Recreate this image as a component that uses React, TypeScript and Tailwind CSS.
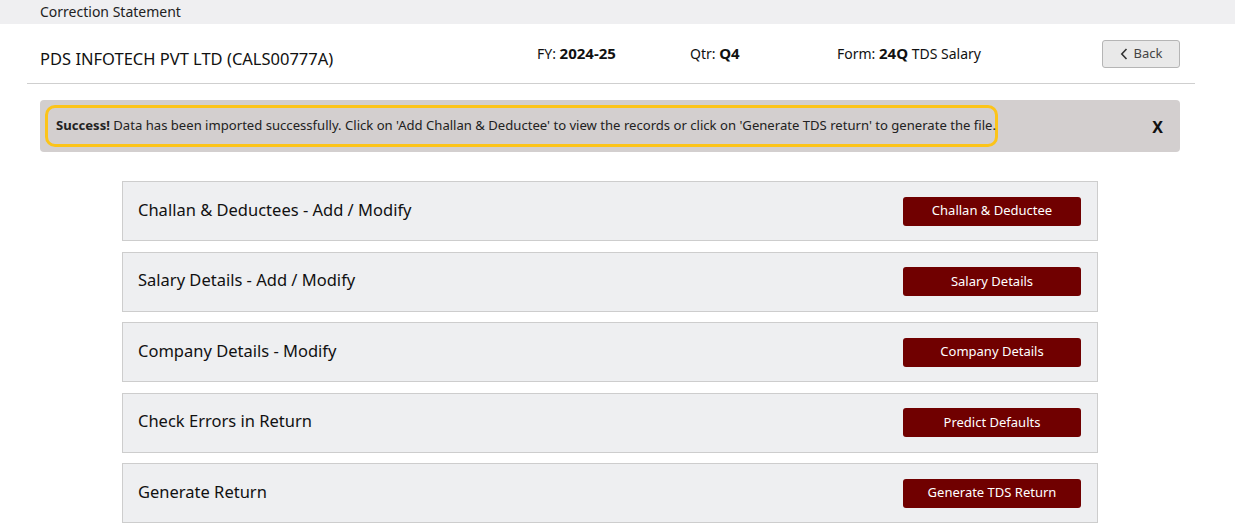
import React from "react";

const rows = [
  { title: "Challan & Deductees - Add / Modify", action: "Challan & Deductee" },
  { title: "Salary Details - Add / Modify", action: "Salary Details" },
  { title: "Company Details - Modify", action: "Company Details" },
  { title: "Check Errors in Return", action: "Predict Defaults" },
  { title: "Generate Return", action: "Generate TDS Return" },
];

export default function App() {
  return (
    <div className="min-h-screen bg-white text-[#111] font-['Noto_Sans',sans-serif]">
      <div className="h-6 bg-[#efeff1] pl-10 text-[14px] leading-6 text-[#222]">
        Correction Statement
      </div>

      <div className="mx-[27px] w-[1168px] border-b border-[#cfcfcf]">
        <div className="flex h-[59px] items-center pl-[13px] pr-[15px]">
          <div className="w-[497px] pt-[11px] text-[16.5px]">PDS INFOTECH PVT LTD (CALS00777A)</div>
          <div className="w-[153px] text-[14px]">
            FY: <span className="font-bold text-[15px]">2024-25</span>
          </div>
          <div className="w-[147px] text-[14px]">
            Qtr: <span className="font-bold text-[15px]">Q4</span>
          </div>
          <div className="flex-1 text-[14px]">
            Form: <span className="font-bold text-[15px]">24Q</span> TDS Salary
          </div>
          <button className="flex h-[28px] w-[78px] items-center justify-center gap-1.5 rounded-[3px] border border-[#b5b5b5] bg-[#e9e9e9] text-[13px] text-[#444]">
            <svg width="8" height="12" viewBox="0 0 8 12" fill="none" stroke="#333" strokeWidth="1.6">
              <path d="M6.5 1 1.8 6l4.7 5" />
            </svg>
            Back
          </button>
        </div>
      </div>

      <div className="ml-10 mt-4 flex h-[52px] w-[1140px] items-center justify-between rounded-[4px] bg-[#d3cfcf] pl-[5px] pr-4">
        <div className="flex h-[42px] w-[953px] items-center rounded-[10px] border-[3px] border-[#fcc419] pl-[8px] text-[13.1px] text-[#222]">
          <span className="whitespace-nowrap">
            <b>Success!</b> Data has been imported successfully. Click on 'Add Challan &amp; Deductee' to view the records or click on 'Generate TDS return' to generate the file.
          </span>
        </div>
        <span className="mr-[1px] pt-[2px] text-[16px] font-bold">X</span>
      </div>

      <div className="ml-[122px] mt-[29px] flex w-[976px] flex-col gap-[10.5px]">
        {rows.map((r) => (
          <div
            key={r.title}
            className="flex h-[60px] items-center justify-between border border-[#cdcdcd] bg-[#eeeff1] pl-[15px] pr-[16px]"
          >
            <span className="pb-[2px] text-[16.5px]">{r.title}</span>
            <button className="h-[29px] w-[178px] rounded-[3px] bg-[#700000] text-[13px] text-white">
              {r.action}
            </button>
          </div>
        ))}
      </div>
    </div>
  );
}
